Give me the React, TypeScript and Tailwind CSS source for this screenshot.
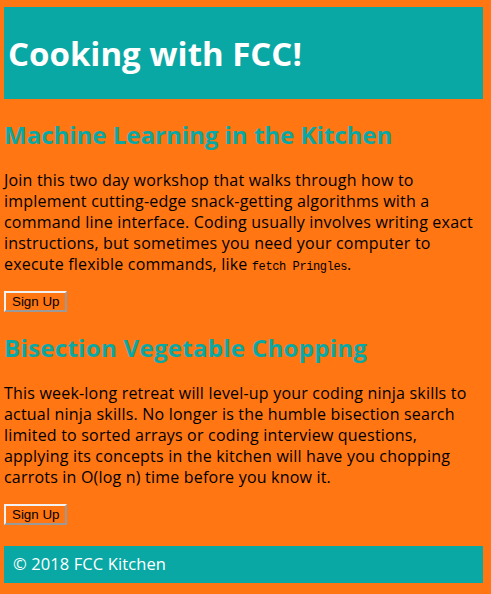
export default function App() {
  return (
    <div className="min-h-screen bg-[#ff7612] pt-[7px] pl-[4px] pr-[8px] pb-[10px] font-['Open_Sans',sans-serif] text-black">
      <header className="h-[92px] bg-[#0aa8a4] flex items-center pl-[4px]">
        <h1 className="text-[33px] font-bold text-white leading-none">Cooking with FCC!</h1>
      </header>
      <main>
        <section>
          <h2 className="mt-[24px] text-[24px] font-bold leading-none text-[#0aa8a4]">Machine Learning in the Kitchen</h2>
          <p className="mt-[23px] text-[16px] leading-[21px] tracking-[0.2px] whitespace-nowrap">
            Join this two day workshop that walks through how to<br />
            implement cutting-edge snack-getting algorithms with a<br />
            command line interface. Coding usually involves writing exact<br />
            instructions, but sometimes you need your computer to<br />
            execute flexible commands, like <code className="font-['Liberation_Mono',monospace] text-[12px] leading-none tracking-[-0.4px]">fetch Pringles</code>.
          </p>
          <button className="mt-[16px] block h-[21px] border-2 border-t-[#f2f2f2] border-l-[#f2f2f2] border-b-[#9a9a9a] border-r-[#9a9a9a] bg-transparent px-[6px] py-0 text-[13.333px] leading-[15px] font-['Liberation_Sans',Arial,sans-serif]">
            Sign Up
          </button>
        </section>
        <section>
          <h2 className="mt-[24px] text-[24px] font-bold leading-none tracking-[0.3px] text-[#0aa8a4]">Bisection Vegetable Chopping</h2>
          <p className="mt-[23px] text-[16px] leading-[21px] tracking-[0.2px] whitespace-nowrap">
            This week-long retreat will level-up your coding ninja skills to<br />
            actual ninja skills. No longer is the humble bisection search<br />
            limited to sorted arrays or coding interview questions,<br />
            applying its concepts in the kitchen will have you chopping<br />
            carrots in O(log n) time before you know it.
          </p>
          <button className="mt-[16px] block h-[21px] border-2 border-t-[#f2f2f2] border-l-[#f2f2f2] border-b-[#9a9a9a] border-r-[#9a9a9a] bg-transparent px-[6px] py-0 text-[13.333px] leading-[15px] font-['Liberation_Sans',Arial,sans-serif]">
            Sign Up
          </button>
        </section>
      </main>
      <footer className="mt-[21px] h-[37px] bg-[#0aa8a4] flex items-center pl-[9px] text-white text-[16.5px] tracking-[0.1px] leading-none">
        © 2018 FCC Kitchen
      </footer>
    </div>
  );
}
